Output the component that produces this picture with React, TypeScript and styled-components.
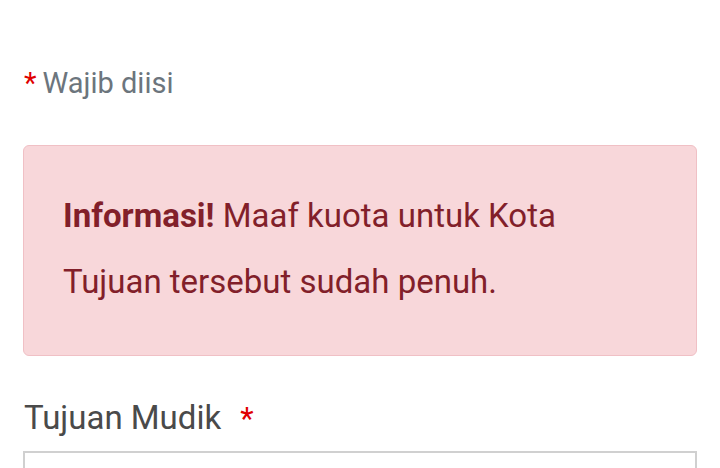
import React from "react";
import styled, { createGlobalStyle } from "styled-components";

const Global = createGlobalStyle`
  html, body { margin: 0; padding: 0; background: #fff; }
  body { font-family: Roboto, "Noto Sans", sans-serif; overflow: hidden; }
`;

const Page = styled.div`
  width: 720px;
  height: 468px;
  overflow: hidden;
  box-sizing: border-box;
  padding: 61px 23px 0 23px;
  display: flex;
  flex-direction: column;
  & > * { flex-shrink: 0; }
`;

const Required = styled.p`
  margin: 0;
  font-size: 29px;
  line-height: 44px;
  color: #6c757d;
  display: flex;
  align-items: baseline;
  gap: 6px;
  padding-left: 1px;
`;

const Star = styled.span`
  color: #e00000;
  font-size: 29px;
`;

const Alert = styled.div`
  margin-top: 40px;
  box-sizing: border-box;
  background: #f8d7da;
  border: 1px solid #f0c0c5;
  border-radius: 6px;
  padding: 37px 40px 40px 39px;
  color: #821f2a;
  font-size: 33px;
  line-height: 66px;
`;

const AlertText = styled.p`
  margin: 0;
  max-width: 560px;
`;

const Strong = styled.strong`
  font-weight: 700;
`;

const Label = styled.label`
  margin-top: 40px;
  display: flex;
  align-items: baseline;
  gap: 19px;
  font-size: 33px;
  line-height: 44px;
  color: #4a4a4a;
  padding-left: 1px;
`;

const LabelStar = styled.span`
  color: #e00000;
  font-size: 31px;
`;

const Input = styled.div`
  margin-top: 10px;
  height: 20px;
  border: 2px solid #d0d0d0;
  border-bottom: none;
`;

export default function App() {
  return (
    <>
      <Global />
      <Page>
        <Required>
          <Star>*</Star>
          <span>Wajib diisi</span>
        </Required>
        <Alert>
          <AlertText>
            <Strong>Informasi!</Strong> Maaf kuota untuk Kota Tujuan tersebut sudah penuh.
          </AlertText>
        </Alert>
        <Label>
          <span>Tujuan Mudik</span>
          <LabelStar>*</LabelStar>
        </Label>
        <Input />
      </Page>
    </>
  );
}
